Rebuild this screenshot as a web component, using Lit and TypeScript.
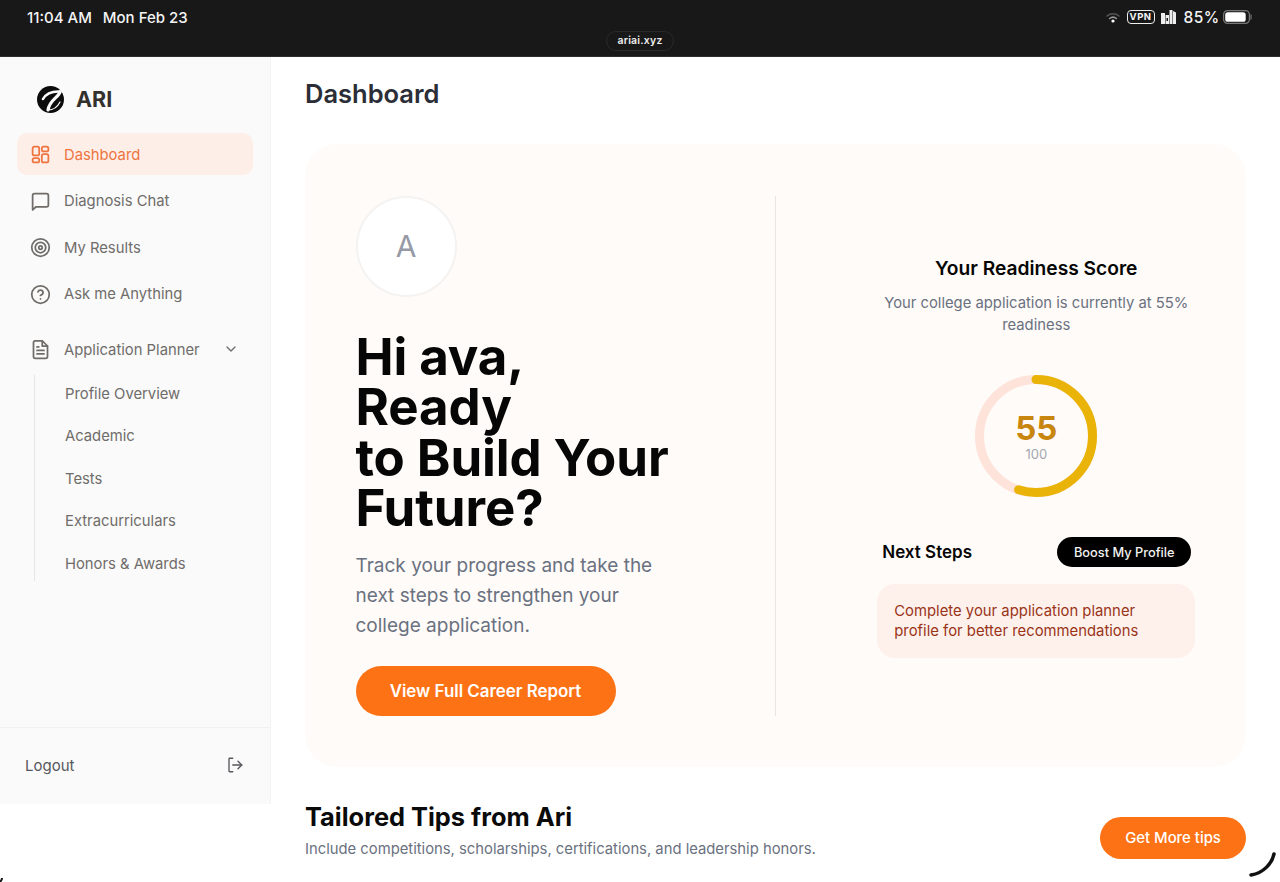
import { LitElement, html, css, svg } from "lit";
import { customElement } from "lit/decorators.js";

const svgPath = (p: string) => svg`<path d=${p}></path>`;
const i = (d: string, size = 21, sw = 2) => html`<svg width=${size} height=${size} viewBox="0 0 24 24" fill="none" stroke="currentColor" stroke-width=${sw} stroke-linecap="round" stroke-linejoin="round">${d.split("|").map((p) => svgPath(p))}</svg>`;

@customElement("app-root")
export class AppRoot extends LitElement {
  static styles = css`
    :host { display: block; width: 1280px; height: 882px; overflow: hidden; position: relative; background: #fff; font-family: Inter, "Liberation Sans", sans-serif; }
    * { box-sizing: border-box; }
    .status { height: 57px; background: #181818; border-bottom: 1px solid #2c2c2c; color: #f4f4f4; position: relative; display: flex; justify-content: space-between; padding: 8px 28px 0 27px; font-size: 15px; font-weight: 500; }
    .clock { display: flex; gap: 11px; height: 18px; align-items: center; }
    .sys { display: flex; gap: 7px; align-items: center; height: 18px; }
    .wifi { margin-right: -1px; }
    .vpn { border: 1.500px solid #eee; border-radius: 4px; font-size: 9.500px; font-weight: 700; padding: 0 2px; height: 14px; line-height: 11px; letter-spacing: .5px; margin-right: -1px; }
    .pct { font-size: 15.500px; letter-spacing: .4px; margin-left: 1px; margin-right: -3.500px; font-weight: 500; }
    .url { position: absolute; left: 606px; top: 31px; width: 68px; height: 20px; border: 1px solid #2a2a2a; border-radius: 10px; font-size: 10.500px; font-weight: 600; line-height: 18px; text-align: center; letter-spacing: .2px; color: #eee; }
    .body { display: flex; height: 825px; }
    aside { width: 271px; height: 747px; flex: none; background: #fafafa; border-right: 1px solid #f3f3f3; display: flex; flex-direction: column; padding-top: 27px; }
    .brand { display: flex; align-items: center; gap: 11px; padding-left: 36px; height: 30px; font-size: 21.500px; font-weight: 700; color: #33302e; margin-bottom: 19px; }
    nav { padding: 0 17px; display: flex; flex-direction: column; flex: 1; }
    .item { height: 42px; display: flex; align-items: center; padding: 1px 0 0 13px; gap: 13px; font-size: 14.800px; color: #6f6c69; margin-bottom: 4.600px; border-radius: 10px; }
    .item svg { flex: none; }
    .item.on { background: #fdeee8; color: #ee7440; }
    .item.plan { margin-top: 9px; margin-bottom: 0; position: relative; }
    .chev { position: absolute; left: 206px; top: 13px; }
    .sub { margin: 5px 0 0 17px; border-left: 1px solid #e6e6e6; height: 206px; padding-left: 30px; display: flex; flex-direction: column; }
    .sub div { height: 42.400px; display: flex; align-items: center; font-size: 14.800px; color: #6f6c69; flex: none; }
    .sub div:first-child { margin-top: -2.500px; }
    .logout { border-top: 1px solid #f1f1f1; height: 77px; display: flex; align-items: center; justify-content: space-between; padding: 0 26px 2px 25px; font-size: 15px; color: #56575c; }
    main { flex: 1; padding: 0 34px; min-width: 0; }
    h1 { margin: 0; height: 87px; padding-top: 20px; font-size: 25.500px; line-height: 34px; font-weight: 600; color: #2b2e37; }
    .card { height: 623px; border-radius: 32px; background: #fffbf8; display: flex; padding: 52px 0 51px 51px; margin-left: -0.500px; }
    .left { width: 420px; border-right: 1px solid #e8e6e4; }
    .avatar { width: 101px; height: 101px; border-radius: 50%; background: #fff; border: 2px solid #f4f3f2; display: flex; align-items: center; justify-content: center; font-size: 30px; color: #969aa6; padding-bottom: 2px; }
    h2 { margin: 35px 0 0; font-size: 51px; line-height: 50.400px; font-weight: 700; color: #060606; width: 330px; letter-spacing: -0.100px; }
    .lead { margin: 17px 0 0; font-size: 19px; line-height: 30px; color: #6a7180; width: 320px; }
    .cta { margin-top: 25px; width: 260px; height: 50px; border-radius: 25px; background: #fd7214; color: #fff; font-size: 16.900px; font-weight: 600; display: flex; align-items: center; justify-content: center; }
    .right { flex: 1; display: flex; flex-direction: column; align-items: center; padding-left: 51px; padding-top: 58px; }
    h3 { margin: 0; font-size: 19.200px; line-height: 28px; font-weight: 600; color: #060606; }
    .desc { margin: 10px 0 0; width: 320px; text-align: center; font-size: 14.800px; line-height: 22px; color: #6a7180; }
    .ring { margin-top: 39px; width: 122px; height: 122px; position: relative; }
    .ring svg { display: block; }
    .score { position: absolute; inset: 0; display: flex; flex-direction: column; align-items: center; justify-content: center; }
    .score b { font-size: 33px; line-height: 36px; font-weight: 700; color: #c9860f; }
    .score span { font-size: 13px; line-height: 17px; color: #a3a7b1; }
    .steps { margin-top: 40px; width: 318px; display: flex; justify-content: space-between; align-items: center; padding: 0 4px 0 5px; font-size: 17px; font-weight: 600; color: #060606; }
    .boost { width: 134px; height: 30px; border-radius: 15px; background: #000; color: #f2f2f2; font-size: 12.800px; font-weight: 500; display: flex; align-items: center; justify-content: center; }
    .note { margin-top: 17px; width: 318px; height: 74px; border-radius: 18px; background: #fef1ec; color: #9a3418; font-size: 14.850px; line-height: 20px; padding: 17px 16px 17px 17px; }
    .tips { display: flex; justify-content: space-between; margin-top: 34px; }
    .tips h4 { margin: 0; font-size: 25.400px; line-height: 32px; font-weight: 700; color: #0a0a0a; }
    .tips p { margin: 3px 0 0; font-size: 14.800px; line-height: 26px; color: #6a7180; }
    .more { margin-top: 16px; width: 146px; height: 42px; border-radius: 21px; background: #fd7214; color: #fff; font-size: 14.900px; font-weight: 500; display: flex; align-items: center; justify-content: center; }
    .corner { position: absolute; left: 1245px; top: 848px; }
    .corner2 { position: absolute; left: 0; top: 877px; }
  `;

  render() {
    const sub = ["Profile Overview", "Academic", "Tests", "Extracurriculars", "Honors & Awards"];
    const dash = "M5 3h3.500a2 2 0 0 1 2 2v6a2 2 0 0 1-2 2H5a2 2 0 0 1-2-2V5a2 2 0 0 1 2-2z|M15.500 3H19a2 2 0 0 1 2 2v1.500a2 2 0 0 1-2 2h-3.500a2 2 0 0 1-2-2V5a2 2 0 0 1 2-2z|M15.500 11.500H19a2 2 0 0 1 2 2V19a2 2 0 0 1-2 2h-3.500a2 2 0 0 1-2-2v-5.500a2 2 0 0 1 2-2z|M5 16h3.500a2 2 0 0 1 2 2v1a2 2 0 0 1-2 2H5a2 2 0 0 1-2-2v-1a2 2 0 0 1 2-2z";
    return html`
      <div class="status">
        <div class="clock"><span>11:04 AM</span><span>Mon Feb 23</span></div>
        <div class="sys">
          <svg class="wifi" width="16" height="12" viewBox="0 0 16 12" fill="none" stroke-linecap="round"><path d="M2 5c3.400-3 8.600-3 12 0" stroke="#555" stroke-width="1.500"/><path d="M4.600 7.500c2-1.600 4.800-1.600 6.800 0" stroke="#999" stroke-width="1.500"/><circle cx="8" cy="10" r="1.600" fill="#fff"/></svg>
          <span class="vpn">VPN</span>
          <svg width="15" height="14" viewBox="0 0 15 14" fill="#eee"><rect x="0" y="3" width="4" height="11"/><rect x="4.500" y="5" width="3.500" height="9"/><rect x="8.500" y="0" width="3" height="14"/><path d="M12 1l3 1.500V14h-3z"/><rect x="5.500" y="8" width="1.500" height="3" fill="#181818"/></svg>
          <span class="pct">85%</span>
          <svg width="29" height="14" viewBox="0 0 29 14"><rect x=".6" y=".6" width="25.800" height="12.800" rx="4" fill="none" stroke="#777" stroke-width="1.200"/><rect x="2.200" y="2.200" width="20.500" height="9.600" rx="2.600" fill="#fff"/><path d="M28 5v4" stroke="#666" stroke-width="1.400" stroke-linecap="round"/></svg>
        </div>
        <div class="url">ariai.xyz</div>
      </div>
      <div class="body">
        <aside>
          <div class="brand">
            <svg width="29" height="29" viewBox="0 0 29 29" fill="none" stroke-linecap="round"><circle cx="14.500" cy="14.500" r="13.500" fill="#0c0c0c"/><path d="M7 14C10 8.500 16 6 24.500 6.500" stroke="#fafafa" stroke-width="2.600"/><path d="M24 7C22 13 13.500 15 12 25" stroke="#fafafa" stroke-width="3.200"/><path d="M12 25C17 25 21 23 24 17" stroke="#fafafa" stroke-width="1.200"/></svg>
            ARI
          </div>
          <nav>
            <div class="item on">${i(dash)}Dashboard</div>
            <div class="item">${i("M21 16a2 2 0 0 1-2 2H7l-4 3.500V5a2 2 0 0 1 2-2h14a2 2 0 0 1 2 2z")}Diagnosis Chat</div>
            <div class="item">${i("M12 2a10 10 0 1 0 0 20a10 10 0 1 0 0-20z|M12 6a6 6 0 1 0 0 12a6 6 0 1 0 0-12z|M12 10a2 2 0 1 0 0 4a2 2 0 1 0 0-4z")}My Results</div>
            <div class="item">${i("M12 2a10 10 0 1 0 0 20a10 10 0 1 0 0-20z|M9.100 9a3 3 0 0 1 5.800 1c0 2-3 3-3 3|M12 17h.01")}Ask me Anything</div>
            <div class="item plan">${i("M14 2H6a2 2 0 0 0-2 2v16a2 2 0 0 0 2 2h12a2 2 0 0 0 2-2V8z|M14 2v6h6|M16 13H8|M16 17H8|M10 9H8")}Application Planner
              <span class="chev">${i("M6 9l6 6l6-6", 16, 2)}</span></div>
            <div class="sub">${sub.map((s) => html`<div>${s}</div>`)}</div>
          </nav>
          <div class="logout">Logout ${i("M9 21H5a1 1 0 0 1-1-1V4a1 1 0 0 1 1-1h4|M16 17l5-5l-5-5|M21 12H9", 18, 1.8)}</div>
        </aside>
        <main>
          <h1>Dashboard</h1>
          <section class="card">
            <div class="left">
              <div class="avatar">A</div>
              <h2>Hi ava,<br />Ready<br />to Build Your Future?</h2>
              <p class="lead">Track your progress and take the next steps to strengthen your college application.</p>
              <div class="cta">View Full Career Report</div>
            </div>
            <div class="right">
              <h3>Your Readiness Score</h3>
              <p class="desc">Your college application is currently at 55% readiness</p>
              <div class="ring">
                <svg width="122" height="122" viewBox="0 0 122 122">
                  <circle cx="61" cy="61" r="56.500" fill="none" stroke="#fde3d9" stroke-width="9"/>
                  <circle cx="61" cy="61" r="56.500" fill="none" stroke="#eab308" stroke-width="9" stroke-linecap="round" pathLength="100" stroke-dasharray="55 100" transform="rotate(-90 61 61)"/>
                </svg>
                <div class="score"><b>55</b><span>100</span></div>
              </div>
              <div class="steps"><span>Next Steps</span><span class="boost">Boost My Profile</span></div>
              <div class="note">Complete your application planner profile for better recommendations</div>
            </div>
          </section>
          <div class="tips">
            <div><h4>Tailored Tips from Ari</h4><p>Include competitions, scholarships, certifications, and leadership honors.</p></div>
            <div class="more">Get More tips</div>
          </div>
        </main>
      </div>
      <svg class="corner" width="32" height="30" viewBox="0 0 32 30" fill="none"><path d="M29 6C27 15 19 25 6 27" stroke="#111" stroke-width="3.500" stroke-linecap="round"/></svg>
      <svg class="corner2" width="6" height="5" viewBox="0 0 6 5"><path d="M0 5C1 4 2 3 2 1" stroke="#111" stroke-width="2" fill="none"/></svg>
    `;
  }
}
